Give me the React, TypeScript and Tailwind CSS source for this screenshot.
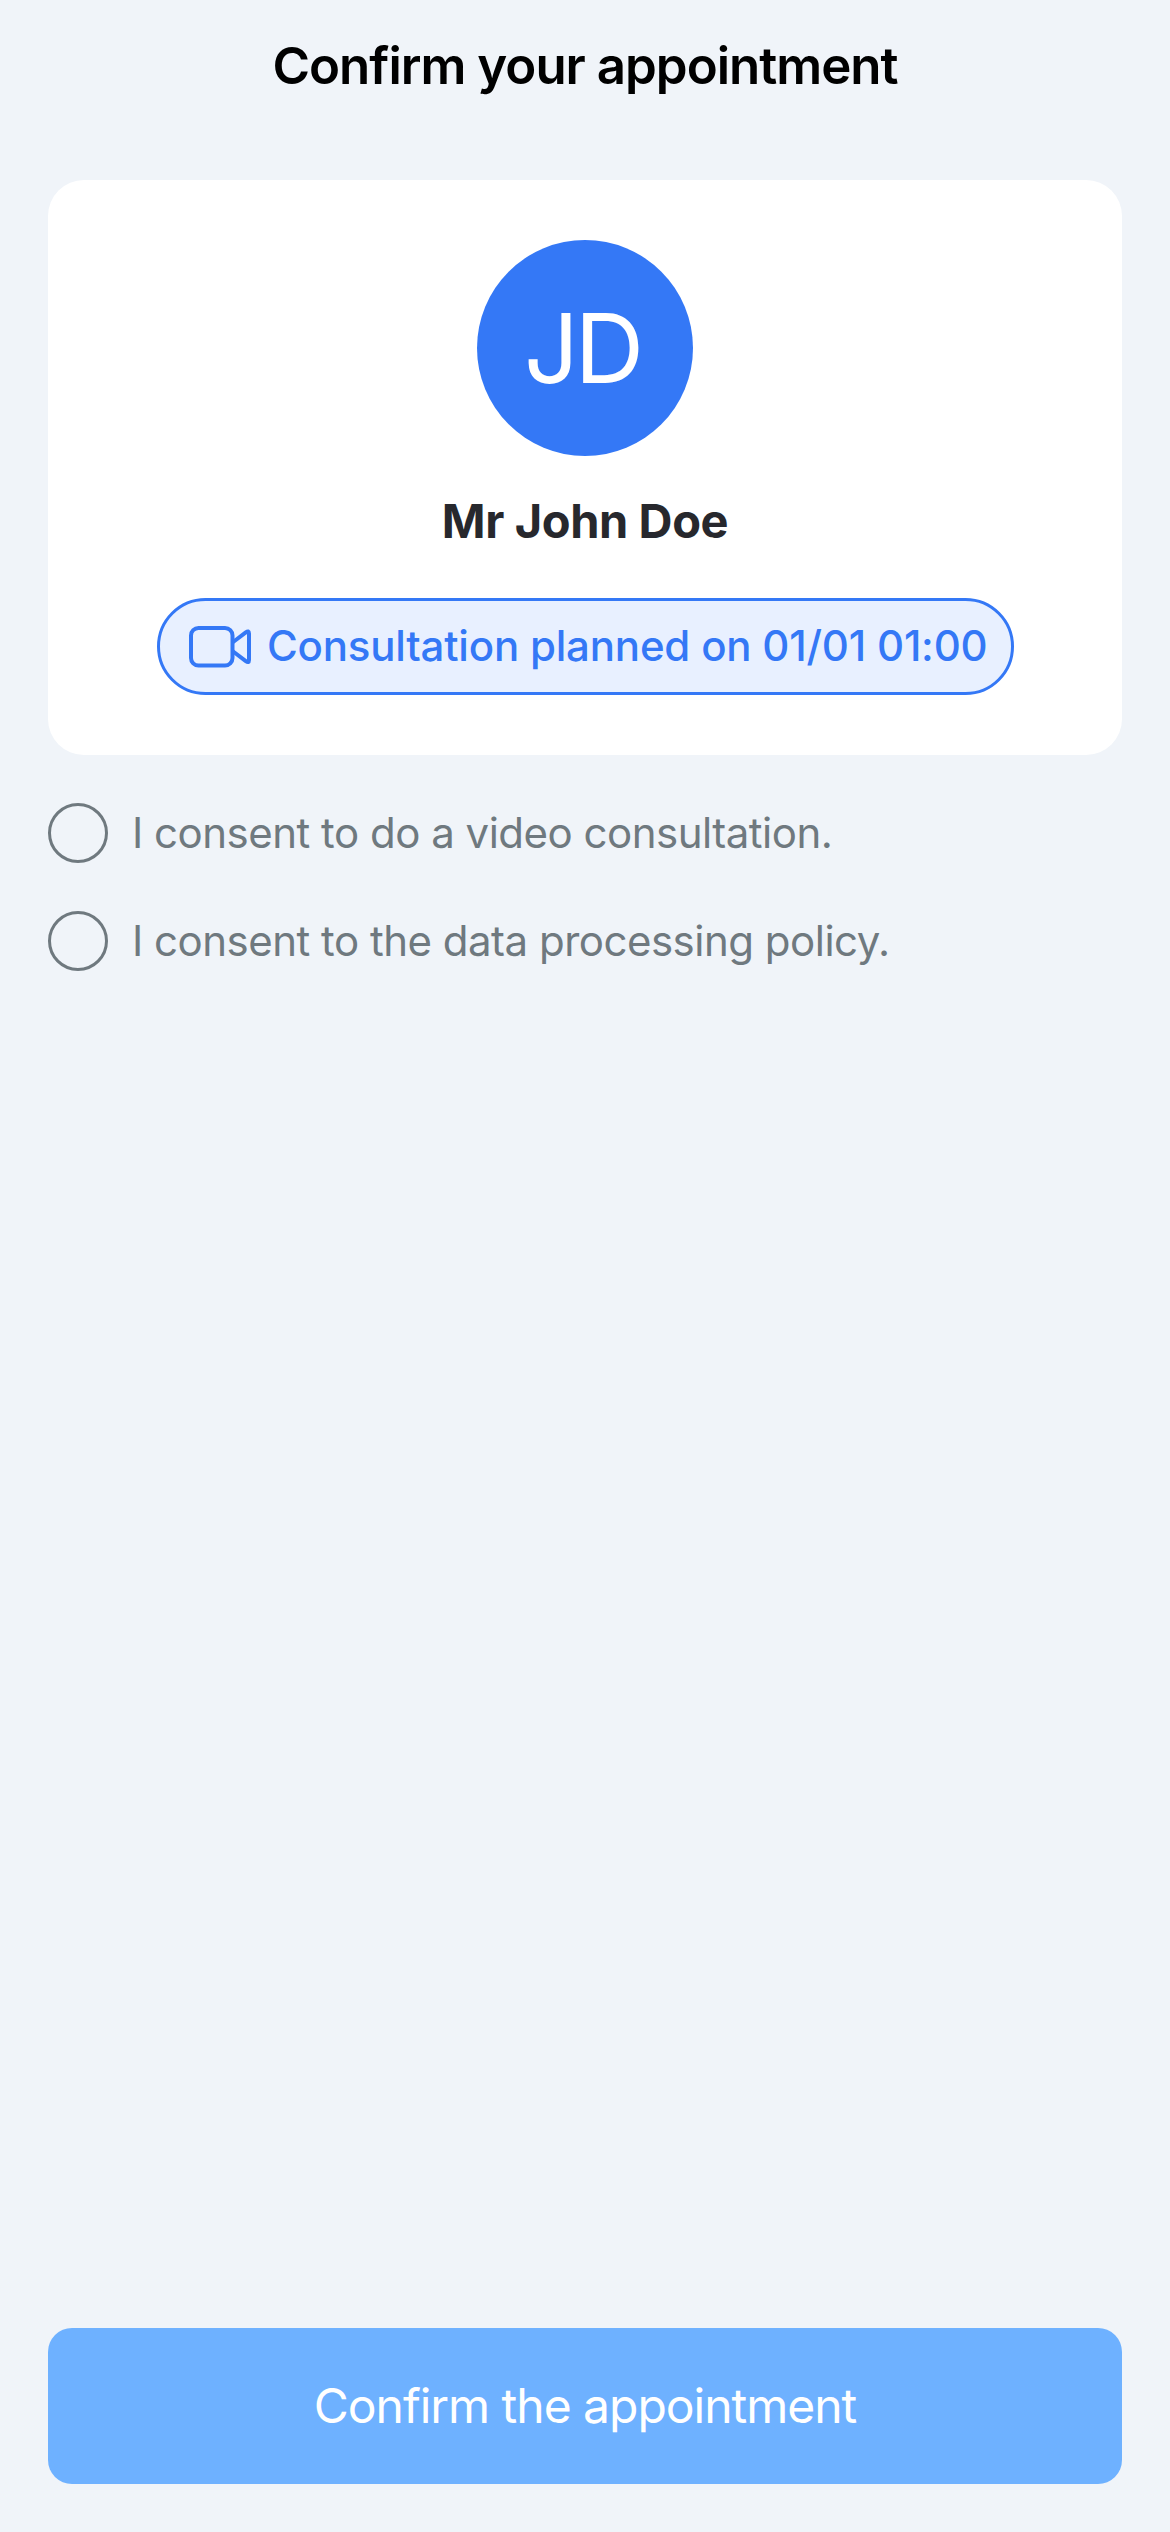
const consents = ["I consent to do a video consultation.", "I consent to the data processing policy."];

export default function App() {
  return (
    <main className="flex h-[2532px] w-[1170px] flex-col bg-[#f0f4f9] px-12 pb-12 font-[Inter,sans-serif]">
      <h1 className="mt-[34px] h-[64px] whitespace-nowrap text-center text-[51px] font-semibold leading-[64px] tracking-[-1px] text-black">
        Confirm your appointment
      </h1>
      <section className="mt-[82px] flex h-[575px] flex-col items-center rounded-[36px] bg-white pt-[60px]">
        <div className="flex size-[216px] items-center justify-center rounded-full bg-[#3478f6] pr-[6px] pb-px text-[96px] font-[380] leading-none tracking-[-4px] text-white">
          JD
        </div>
        <h2 className="mt-[35px] whitespace-nowrap text-[47px] font-bold leading-[60px] tracking-[-0.4px] text-[#27282d]">Mr John Doe</h2>
        <div className="ml-px mt-[47px] flex h-[97px] w-[857px] items-center rounded-full border-[3px] border-[#3478f6] bg-[#e8f0ff] pl-[29px] text-[#3478f6]">
          <svg className="mt-px h-[42px] w-[63px] shrink-0" viewBox="0 0 63 42" fill="none" stroke="currentColor" strokeWidth="4" strokeLinejoin="round">
            <rect x="2" y="2" width="41.5" height="37.5" rx="7.5" />
            <path d="M43.5 16.5 56.8 6.3q3.2-2.3 3.2 1.2v26.5q0 3.5-3.2 1.2L43.5 25" />
          </svg>
          <span className="-mt-[3px] ml-[15px] whitespace-nowrap text-[42px] font-medium tracking-[-0.2px]">Consultation planned on 01/01 01:00</span>
        </div>
      </section>
      <div className="mt-12 flex flex-col gap-12">
        {consents.map((text) => (
          <label key={text} className="flex h-[60px] items-center gap-6 whitespace-nowrap text-[42px] tracking-[-0.5px] text-[#6f797f]">
            <span className="size-[60px] shrink-0 rounded-full border-[3px] border-[#6f797f]" />
            <span className="-mt-0.5">{text}</span>
          </label>
        ))}
      </div>
      <button className="mt-auto h-[156px] shrink-0 rounded-3xl bg-[#6eb1ff] text-[48px] tracking-[-1.02px] text-white">Confirm the appointment</button>
    </main>
  );
}
